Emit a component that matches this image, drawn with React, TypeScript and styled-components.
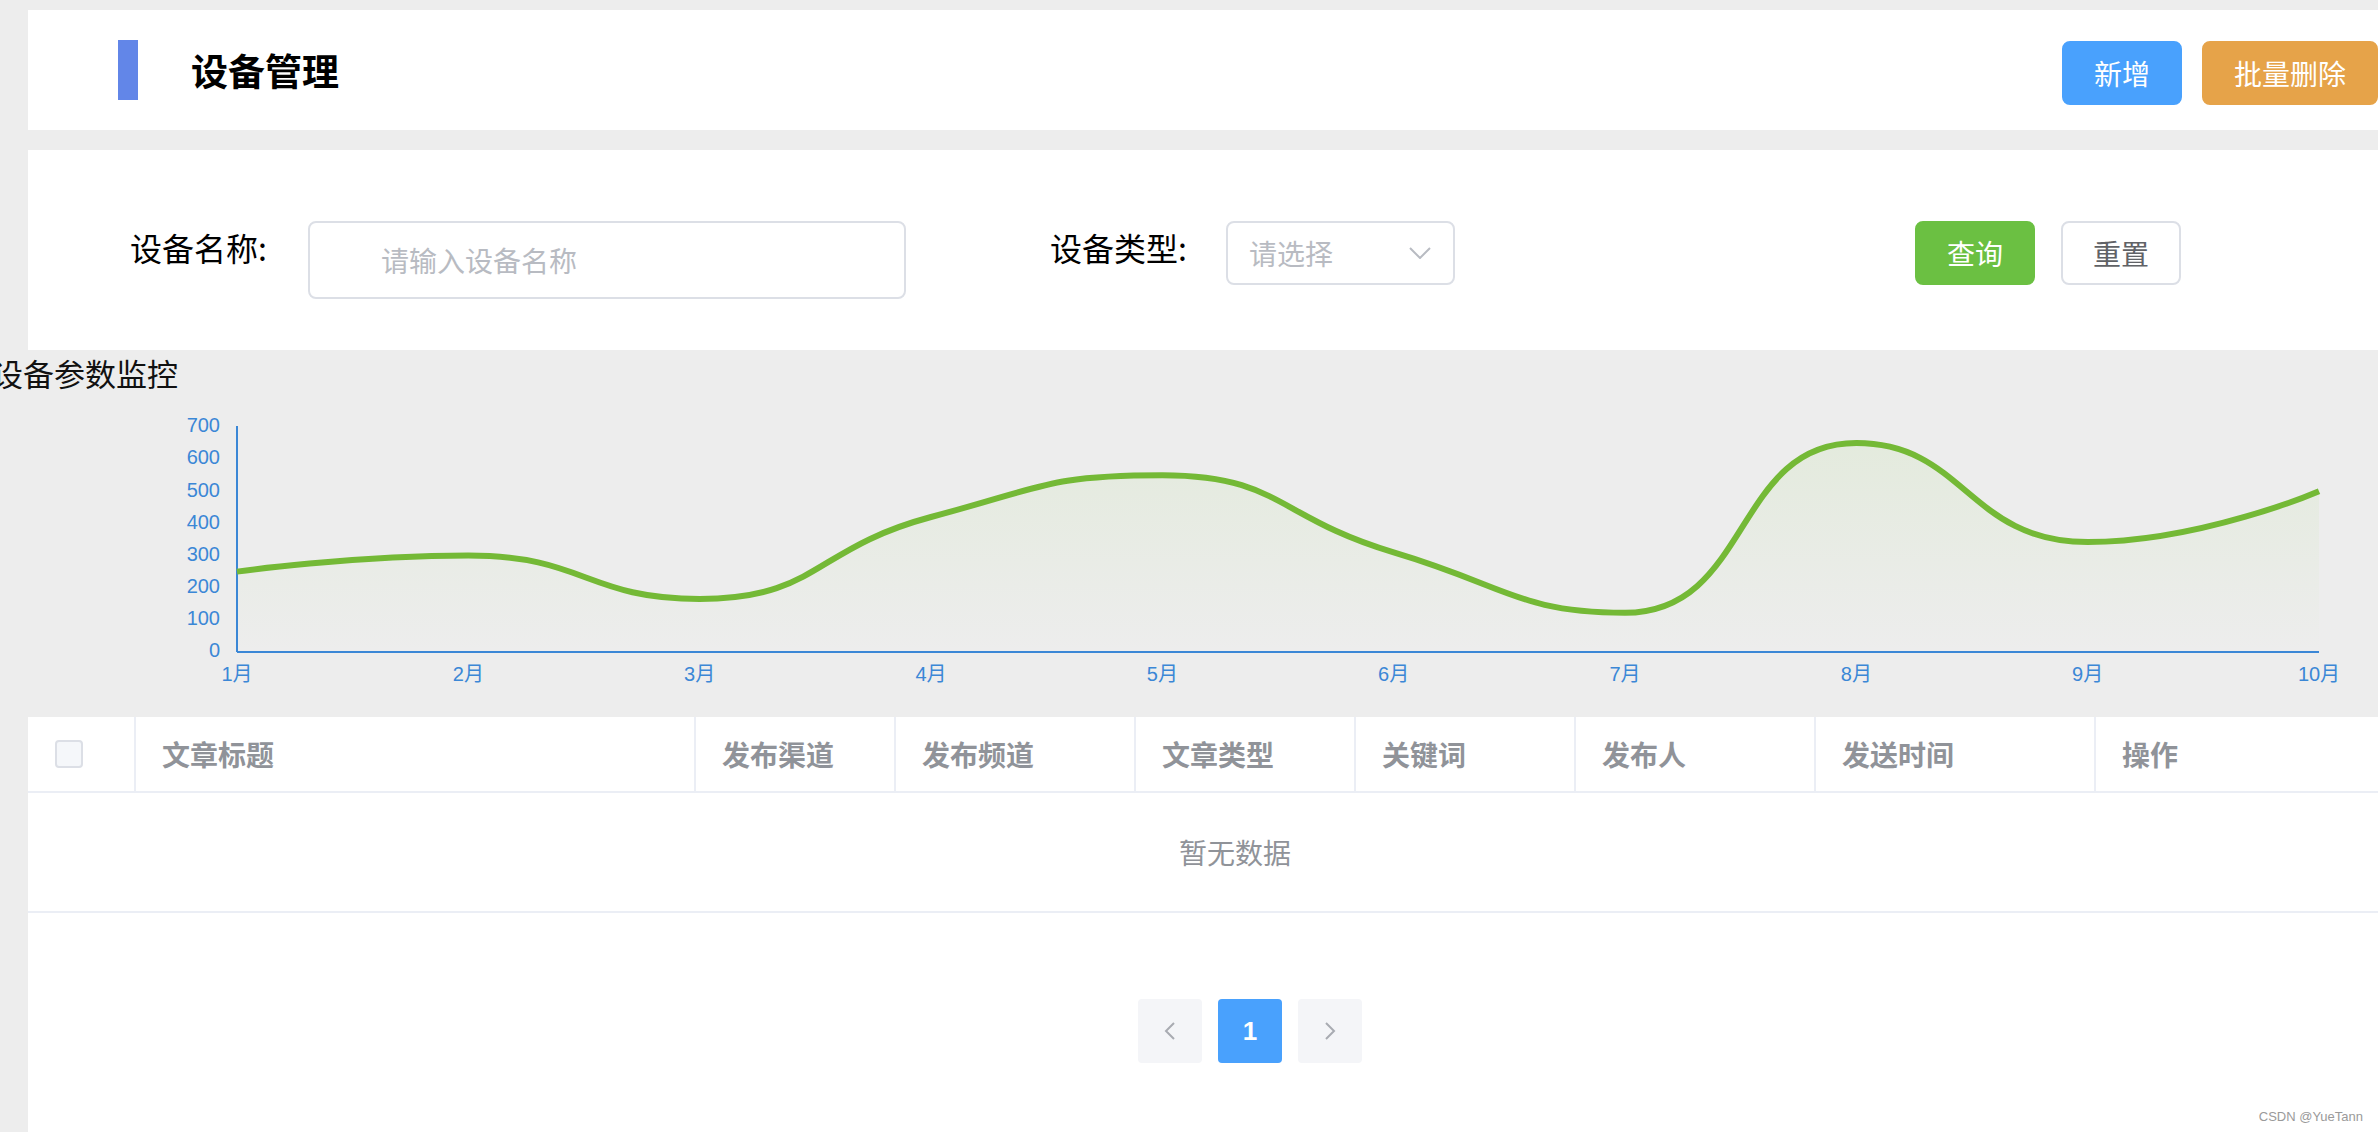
import React from "react";
import styled, { createGlobalStyle, css } from "styled-components";

const GlobalStyle = createGlobalStyle`
  html, body {
    margin: 0;
    padding: 0;
    background: #ededed;
    overflow: hidden;
    font-family: "Noto Sans CJK SC", "Noto Sans", sans-serif;
  }
  * { box-sizing: border-box; }
`;

const Page = styled.div`
  position: relative;
  height: 1132px;
  padding: 10px 0 0 28px;
  display: flex;
  flex-direction: column;
`;

const HeaderCard = styled.header`
  height: 120px;
  background: #ffffff;
  display: flex;
  align-items: center;
  padding-left: 90px;
`;

const AccentBar = styled.span`
  width: 20px;
  height: 60px;
  background: #6286e8;
`;

const PageTitle = styled.h1`
  margin: 0 0 0 53px;
  font-size: 37px;
  font-weight: 700;
  color: #000;
  line-height: 1;
`;

const HeaderActions = styled.div`
  margin-left: auto;
  padding-top: 6px;
  display: flex;
  gap: 20px;
`;

type Variant = "primary" | "warning" | "success" | "plain";

const variants: Record<Variant, ReturnType<typeof css>> = {
  primary: css`
    background: #49a1fd;
    color: #fff;
    border-color: #49a1fd;
  `,
  warning: css`
    background: #e6a349;
    color: #fff;
    border-color: #e6a349;
  `,
  success: css`
    background: #6bc042;
    color: #fff;
    border-color: #6bc042;
  `,
  plain: css`
    background: #fff;
    color: #606266;
    border-color: #dcdfe6;
  `,
};

const Button = styled.button<{ $variant: Variant }>`
  height: 64px;
  padding: 0 30px;
  border: 2px solid;
  border-radius: 8px;
  font-family: "Noto Sans CJK SC", sans-serif;
  font-size: 28px;
  line-height: 1;
  cursor: pointer;
  ${(p) => variants[p.$variant]}
`;

const SearchCard = styled.section`
  margin-top: 20px;
  height: 200px;
  background: #fff;
  display: flex;
  align-items: flex-start;
  padding: 71px 197px 0 102px;
`;

const Field = styled.div<{ $gapAfter?: number }>`
  display: flex;
  align-items: flex-start;
  margin-right: ${(p) => p.$gapAfter ?? 0}px;
`;

const FieldLabel = styled.label<{ $width: number }>`
  width: ${(p) => p.$width}px;
  font-size: 32px;
  line-height: 52px;
  color: #000;
  white-space: nowrap;
`;

const TextInput = styled.input`
  width: 598px;
  height: 78px;
  border: 2px solid #dcdfe6;
  border-radius: 8px;
  padding: 0 0 0 71px;
  font-family: "Noto Sans CJK SC", sans-serif;
  font-size: 28px;
  color: #606266;
  outline: none;
  &::placeholder {
    color: #b8bbc2;
  }
`;

const SelectBox = styled.div`
  width: 229px;
  height: 64px;
  border: 2px solid #dcdfe6;
  border-radius: 8px;
  padding: 0 22px 0 21px;
  display: flex;
  align-items: center;
  justify-content: space-between;
  font-size: 28px;
  color: #b8bbc2;
`;

const SearchActions = styled.div`
  margin-left: auto;
  display: flex;
  gap: 26px;
`;

const ChartSection = styled.section`
  height: 367px;
  display: flex;
  flex-direction: column;
`;

const ChartTitle = styled.h2`
  margin: 0 0 0 -36px;
  font-size: 31px;
  font-weight: 400;
  line-height: 45px;
  color: #111;
  white-space: nowrap;
`;

const ChartSvg = styled.svg`
  display: block;
  width: 2350px;
  height: 322px;
`;

const AxisText = styled.text`
  font-family: "Liberation Sans", "Noto Sans CJK SC", sans-serif;
  font-size: 20px;
  fill: #3b87d6;
`;

const TableCard = styled.section`
  flex: 1;
  background: #fff;
  overflow: hidden;
  display: flex;
  flex-direction: column;
`;

const TableInner = styled.div`
  width: 2414px;
`;

const HeaderRow = styled.div<{ $cols: string }>`
  display: grid;
  grid-template-columns: ${(p) => p.$cols};
  height: 76px;
  border-bottom: 2px solid #ebeef5;
`;

const HeaderCell = styled.div<{ $last?: boolean }>`
  display: flex;
  align-items: center;
  padding-left: 26px;
  font-size: 28px;
  font-weight: 700;
  color: #909399;
  border-right: ${(p) => (p.$last ? "none" : "2px solid #ebeef5")};
  white-space: nowrap;
`;

const CheckboxCell = styled(HeaderCell)`
  padding-left: 27px;
`;

const Checkbox = styled.span`
  width: 28px;
  height: 28px;
  border: 2px solid #dcdfe6;
  border-radius: 4px;
  background: #f5f7fa;
`;

const EmptyRow = styled.div`
  height: 120px;
  border-bottom: 2px solid #ebeef5;
  display: flex;
  align-items: center;
  justify-content: center;
  font-size: 28px;
  color: #909399;
`;

const Pagination = styled.nav`
  margin-top: 86px;
  padding-left: 94px;
  display: flex;
  justify-content: center;
  gap: 16px;
`;

const PageButton = styled.button<{ $active?: boolean }>`
  width: 64px;
  height: 64px;
  border: none;
  border-radius: 4px;
  display: flex;
  align-items: center;
  justify-content: center;
  font-family: "Liberation Sans", "Noto Sans", sans-serif;
  font-size: 26px;
  font-weight: 700;
  background: ${(p) => (p.$active ? "#49a1fd" : "#f4f5f8")};
  color: ${(p) => (p.$active ? "#fff" : "#a8abb2")};
`;

const Watermark = styled.span`
  position: absolute;
  right: 15px;
  bottom: 8px;
  font-family: "Liberation Sans", sans-serif;
  font-size: 13px;
  color: #9a9a9a;
`;

const months = ["1月", "2月", "3月", "4月", "5月", "6月", "7月", "8月", "9月", "10月"];
const values = [250, 300, 165, 420, 550, 310, 122, 650, 342, 500];

const X0 = 209;
const X1 = 2291;
const Y_TOP = 32;
const Y_ZERO = 257;
const stepX = (X1 - X0) / (months.length - 1);
const toY = (v: number) => Y_ZERO - (v / 700) * (Y_ZERO - Y_TOP);

function smoothPath(pts: { x: number; y: number }[], smooth = 0.5): string {
  let d = `M${pts[0].x},${pts[0].y}`;
  let cpx0 = pts[0].x;
  let cpy0 = pts[0].y;
  for (let i = 1; i < pts.length; i++) {
    const { x, y } = pts[i];
    const prev = pts[i - 1];
    let cpx1 = x;
    let cpy1 = y;
    let nCpx0 = x;
    let nCpy0 = y;
    if (i < pts.length - 1) {
      const next = pts[i + 1];
      const vx = next.x - prev.x;
      const isExtremum = (y - prev.y) * (next.y - y) <= 0;
      const vy = isExtremum ? 0 : next.y - prev.y;
      const lenPrev = Math.hypot(x - prev.x, y - prev.y);
      const lenNext = Math.hypot(next.x - x, next.y - y);
      const ratio = lenNext / (lenNext + lenPrev);
      nCpx0 = x + vx * smooth * ratio;
      nCpy0 = y + vy * smooth * ratio;
      cpx1 = x - vx * smooth * (1 - ratio);
      cpy1 = y - vy * smooth * (1 - ratio);
    }
    d += ` C${cpx0},${cpy0} ${cpx1},${cpy1} ${x},${y}`;
    cpx0 = nCpx0;
    cpy0 = nCpy0;
  }
  return d;
}

const points = values.map((v, i) => ({ x: X0 + i * stepX, y: toY(v) }));
const linePath = smoothPath(points);
const areaPath = `${linePath} L${X1},${Y_ZERO} L${X0},${Y_ZERO} Z`;

const Chevron = ({ dir }: { dir: "left" | "right" | "down" }) => {
  if (dir === "down") {
    return (
      <svg width="22" height="12" viewBox="0 0 22 12">
        <polyline points="1,1 11,11 21,1" fill="none" stroke="#b8bbc2" strokeWidth="2" />
      </svg>
    );
  }
  const pts = dir === "left" ? "10,1 2,9 10,17" : "2,1 10,9 2,17";
  return (
    <svg width="12" height="18" viewBox="0 0 12 18">
      <polyline points={pts} fill="none" stroke="#a8abb2" strokeWidth="2" />
    </svg>
  );
};

const columns = [
  { label: "", width: 108 },
  { label: "文章标题", width: 560 },
  { label: "发布渠道", width: 200 },
  { label: "发布频道", width: 240 },
  { label: "文章类型", width: 220 },
  { label: "关键词", width: 220 },
  { label: "发布人", width: 240 },
  { label: "发送时间", width: 280 },
  { label: "操作", width: 346 },
];

export default function App() {
  const cols = columns.map((c) => `${c.width}px`).join(" ");
  return (
    <>
      <GlobalStyle />
      <Page>
        <HeaderCard>
          <AccentBar />
          <PageTitle>设备管理</PageTitle>
          <HeaderActions>
            <Button $variant="primary">新增</Button>
            <Button $variant="warning">批量删除</Button>
          </HeaderActions>
        </HeaderCard>

        <SearchCard>
          <Field $gapAfter={144}>
            <FieldLabel $width={178}>设备名称:</FieldLabel>
            <TextInput placeholder="请输入设备名称" />
          </Field>
          <Field>
            <FieldLabel $width={176}>设备类型:</FieldLabel>
            <SelectBox>
              <span>请选择</span>
              <Chevron dir="down" />
            </SelectBox>
          </Field>
          <SearchActions>
            <Button $variant="success">查询</Button>
            <Button $variant="plain">重置</Button>
          </SearchActions>
        </SearchCard>

        <ChartSection>
          <ChartTitle>设备参数监控</ChartTitle>
          <ChartSvg viewBox="0 0 2350 322">
            <defs>
              <linearGradient id="areaFill" x1="0" y1="0" x2="0" y2="1">
                <stop offset="0%" stopColor="#9fd86a" stopOpacity="0.12" />
                <stop offset="100%" stopColor="#9fd86a" stopOpacity="0" />
              </linearGradient>
            </defs>
            {[0, 100, 200, 300, 400, 500, 600, 700].map((v) => (
              <AxisText key={v} x={192} y={toY(v)} textAnchor="end" dominantBaseline="middle">
                {v}
              </AxisText>
            ))}
            {months.map((m, i) => (
              <AxisText key={m} x={X0 + i * stepX} y={281} textAnchor="middle" dominantBaseline="middle">
                {m}
              </AxisText>
            ))}
            <path d={areaPath} fill="url(#areaFill)" />
            <line x1={X0} y1={Y_TOP - 1} x2={X0} y2={Y_ZERO} stroke="#3b87d6" strokeWidth="2" />
            <line x1={X0} y1={Y_ZERO} x2={X1} y2={Y_ZERO} stroke="#3b87d6" strokeWidth="2" />
            <path d={linePath} fill="none" stroke="#74b936" strokeWidth="6" strokeLinejoin="round" />
          </ChartSvg>
        </ChartSection>

        <TableCard>
          <TableInner>
            <HeaderRow $cols={cols}>
              {columns.map((c, i) =>
                i === 0 ? (
                  <CheckboxCell key="check">
                    <Checkbox />
                  </CheckboxCell>
                ) : (
                  <HeaderCell key={c.label} $last={i === columns.length - 1}>
                    {c.label}
                  </HeaderCell>
                )
              )}
            </HeaderRow>
            <EmptyRow>暂无数据</EmptyRow>
          </TableInner>
          <Pagination>
            <PageButton aria-label="prev">
              <Chevron dir="left" />
            </PageButton>
            <PageButton $active>1</PageButton>
            <PageButton aria-label="next">
              <Chevron dir="right" />
            </PageButton>
          </Pagination>
        </TableCard>
        <Watermark>CSDN @YueTann</Watermark>
      </Page>
    </>
  );
}
